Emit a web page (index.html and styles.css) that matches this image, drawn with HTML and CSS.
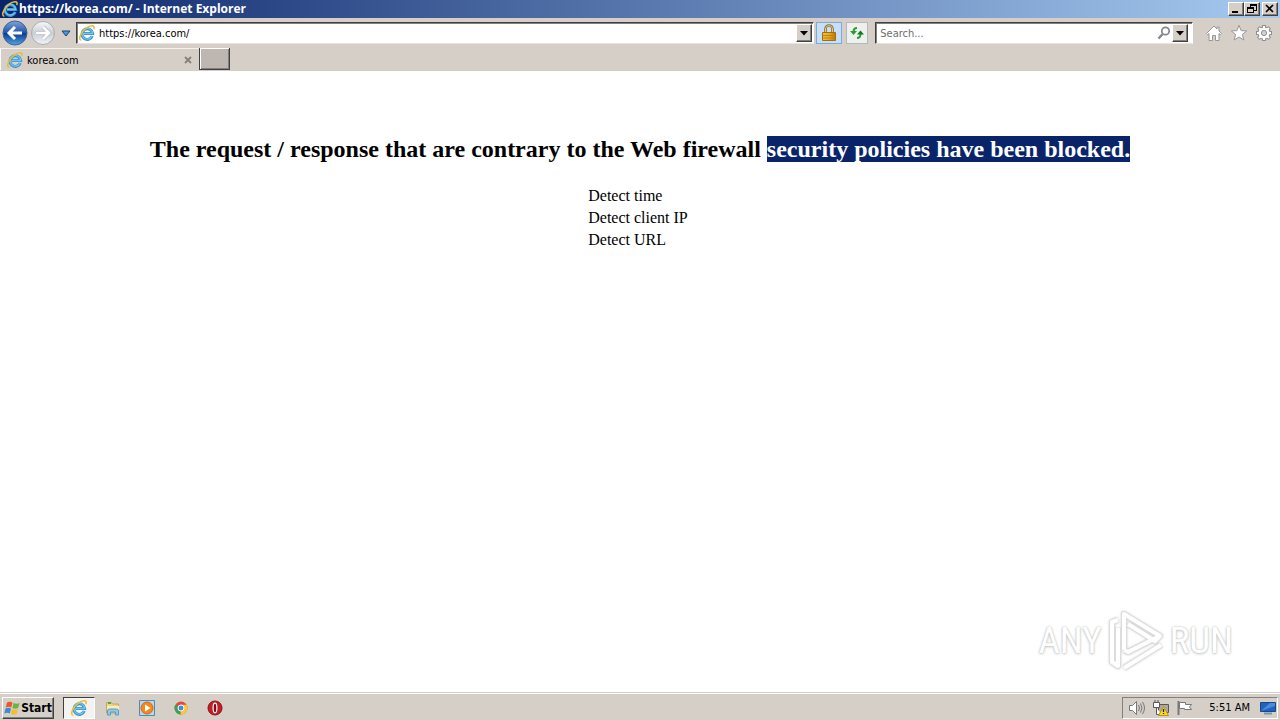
FILE: index.html
```html
<!DOCTYPE html>
<html lang="en">
<head>
<meta charset="UTF-8">
<meta name="viewport" content="width=device-width, initial-scale=1.0">
<title>korea.com</title>
<link rel="stylesheet" href="styles.css">
</head>
<body>
<svg class="defs" width="0" height="0" aria-hidden="true">
    <defs>
        <linearGradient id="blueBall" x1="0" y1="0" x2="0" y2="1">
            <stop offset="0" stop-color="#7fa3dc"/>
            <stop offset="0.48" stop-color="#2456ac"/>
            <stop offset="0.52" stop-color="#0d3c92"/>
            <stop offset="1" stop-color="#4fa5e8"/>
        </linearGradient>
        <linearGradient id="greyBall" x1="0" y1="0" x2="0" y2="1">
            <stop offset="0" stop-color="#f8f9fa"/>
            <stop offset="0.5" stop-color="#c9ced5"/>
            <stop offset="1" stop-color="#f2f5f8"/>
        </linearGradient>
        <linearGradient id="gold" x1="0" y1="0" x2="1" y2="0">
            <stop offset="0" stop-color="#f6c33b"/>
            <stop offset="0.5" stop-color="#e9a820"/>
            <stop offset="1" stop-color="#b87809"/>
        </linearGradient>
        <symbol id="ie" viewBox="0 0 16 16">
            <path d="M13.300 11A5.300 5.300 0 1 1 13.600 8.500H5" fill="none" stroke="#3a93cf" stroke-width="3"/>
            <path d="M13 11.200A5.300 5.300 0 1 1 13.600 8.500H5" fill="none" stroke="#72c4ef" stroke-width="1.300"/>
            <path d="M2.400 15.200C0 15 .3 12 2.400 8.600 5 4.500 9.500 1 13 .8c2.100-.1 2.500 1.300 1.700 3.300" fill="none" stroke="#e9bd35" stroke-width="1.500"/>
        </symbol>
    </defs>
</svg>

<header class="browser">
    <div class="title-bar">
        <svg class="icon"><use href="#ie"/></svg>
        <span class="title">https://korea.com/ - Internet Explorer</span>
        <div class="window-buttons">
            <button class="win-btn" aria-label="Minimize"><svg width="12" height="10"><path d="M2 7h6v2H2z"/></svg></button>
            <button class="win-btn" aria-label="Restore"><svg width="12" height="10"><path d="M4 0h7v7H8V6h2V2H5v1H4zM1 3h7v6H1zM2 5v3h5V5z" fill-rule="evenodd"/></svg></button>
            <button class="win-btn close" aria-label="Close"><svg width="12" height="10"><path d="M2 1l7 7M9 1L2 8" stroke="#000" stroke-width="1.7"/></svg></button>
        </div>
    </div>

    <div class="nav-bar">
        <button class="nav-btn" aria-label="Back">
            <svg width="26" height="26"><circle cx="13" cy="13" r="12" fill="url(#blueBall)" stroke="#42618f"/><path d="M13 7l-6 6 6 6M7.500 13H20" fill="none" stroke="#fff" stroke-width="3"/></svg>
        </button>
        <button class="nav-btn" aria-label="Forward">
            <svg width="26" height="26"><circle cx="13" cy="13" r="11.500" fill="url(#greyBall)" stroke="#a8acb2"/><path d="M13 7l6 6-6 6M18.500 13H6" fill="none" stroke="#b4b9c0" stroke-width="4"/><path d="M13 7l6 6-6 6M18.500 13H6" fill="none" stroke="#fff" stroke-width="2.600"/></svg>
        </button>
        <button class="nav-btn recent" aria-label="Recent pages">
            <svg width="10" height="7"><path d="M1 1h8L5 6z" fill="#4c9ade" stroke="#17427e"/></svg>
        </button>
        <div class="field address">
            <svg class="icon"><use href="#ie"/></svg>
            <input class="text-box" type="text" value="https://korea.com/" aria-label="Address">
            <button class="arrow" aria-label="Show address list"><svg width="8" height="5"><path d="M0 0h8L4 4.500z"/></svg></button>
        </div>
        <button class="tool lock" aria-label="Security report">
            <svg width="16" height="18"><path d="M4.500 9V5a3.500 3.500 0 0 1 7 0v4" fill="none" stroke="#8c6d28" stroke-width="2.600"/><path d="M4.500 9V5a3.500 3.500 0 0 1 7 0v4" fill="none" stroke="#e3c988" stroke-width="1"/><path d="M1.500 8.500h13v8h-13z" fill="url(#gold)" stroke="#a86d0a"/><path d="M2 11.500h12M2 14h12" stroke="#b98316"/></svg>
        </button>
        <button class="tool refresh" aria-label="Refresh">
            <svg width="16" height="16" fill="none" stroke="#2d9a35" stroke-width="2"><path d="M8 3C5.500 3 4.500 4.500 4.500 7"/><path d="M1 6h7l-3.500 4z" fill="#2d9a35" stroke="none"/><path d="M8 13c2.500 0 3.500-1.500 3.500-4"/><path d="M8 9.500h7L11.500 5.500z" fill="#15761e" stroke="none"/></svg>
        </button>
        <div class="field search">
            <input class="text-box" type="text" placeholder="Search..." aria-label="Search">
            <svg width="14" height="14" fill="none" stroke="#85868b"><circle cx="8.500" cy="5" r="3.700" stroke-width="1.700"/><path d="M5.700 8L1.500 12.500" stroke-width="2.400"/></svg>
            <button class="arrow" aria-label="Search options"><svg width="8" height="5"><path d="M0 0h8L4 4.500z"/></svg></button>
        </div>
        <div class="commands">
            <button class="nav-btn" aria-label="Home"><svg width="18" height="18" fill="#fff" stroke="#96979b"><path d="M9 2L1.500 9.500l1.200 1.200L4 9.500v7h3.500v-5h3v5H14v-7l1.300 1.200 1.200-1.200L14 7V3h-2v2z"/></svg></button>
            <button class="nav-btn" aria-label="Favorites"><svg width="18" height="18" fill="#fff" stroke="#96979b"><path d="M9 1.300l2.100 5.300 5.600.3-4.300 3.600 1.400 5.500L9 13l-4.800 3 1.400-5.500L1.300 6.900l5.600-.3z"/></svg></button>
            <button class="nav-btn" aria-label="Tools"><svg width="18" height="18"><g stroke="#8e9095" stroke-width="4"><path d="M9 1v16M1 9h16M3.300 3.300l11.400 11.400M14.700 3.300L3.300 14.700"/></g><circle cx="9" cy="9" r="6.500" fill="#8e9095"/><g stroke="#fff" stroke-width="2"><path d="M9 2v14M2 9h14M4 4l10 10M14 4L4 14"/></g><circle cx="9" cy="9" r="5.500" fill="#fff"/><circle cx="9" cy="9" r="2.600" fill="#d6cfc8" stroke="#8e9095"/></svg></button>
        </div>
    </div>

    <div class="tab-bar">
        <div class="tab">
            <svg class="icon"><use href="#ie"/></svg>
            <span class="tab-title">korea.com</span>
            <button class="tab-close" aria-label="Close tab"><svg width="8" height="8"><path d="M1 1l6 6M7 1L1 7" stroke="#85807a" stroke-width="1.800"/></svg></button>
        </div>
        <button class="new-tab" aria-label="New tab"></button>
    </div>
</header>

<main class="page">
    <h1 class="message">The request / response that are contrary to the Web firewall <mark class="selected">security policies have been blocked.</mark></h1>
    <table class="details">
        <tr><td>Detect time</td><td></td></tr>
        <tr><td>Detect client IP</td><td></td></tr>
        <tr><td>Detect URL</td><td></td></tr>
    </table>
    <div class="watermark">
        <span>ANY</span>
        <svg width="60" height="64" fill="none" stroke-linejoin="round">
            <g stroke="#dcdcdc" stroke-width="6"><path d="M18 42V6l36 22-5 5L22 16M18 42l4 2 32-16"/><path d="M12 12L6 14v40l6 4V20M18 60l37-23"/></g>
            <g stroke="#fff" stroke-width="4"><path d="M18 42V6l36 22-5 5L22 16M18 42l4 2 32-16"/><path d="M12 12L6 14v40l6 4V20M18 60l37-23"/></g>
        </svg>
        <span>RUN</span>
    </div>
</main>

<footer class="taskbar">
    <button class="start">
        <svg width="17" height="16"><path d="M3 2.500q3-1.500 5.500 0L7.300 7.500q-2.500-1.500-5.500 0z" fill="#e8582a"/><path d="M9.500 3q3 1.500 6 0l-1.300 5q-3 1.500-5.800 0z" fill="#6db33f"/><path d="M1.500 8.500q3-1.500 5.500 0l-1.200 5q-2.500-1.500-5.500 0z" fill="#3c8bd6"/><path d="M8 9q3 1.500 6 0l-1.300 5q-3 1.500-5.800 0z" fill="#f5bf2c"/></svg>
        Start
    </button>
    <div class="launchers">
        <button class="launch active" aria-label="Internet Explorer"><svg class="icon"><use href="#ie"/></svg></button>
        <button class="launch" aria-label="Explorer"><svg width="16" height="16"><path d="M1.500 2.500h5l1 1.500h6v9h-12z" fill="#ecd584" stroke="#c8a849"/><path d="M3 3h3" stroke="#4aa84a" stroke-width="2"/><path d="M2 6h12v4H2z" fill="#fbeeb5"/><path d="M2.500 15v-4q0-2 2-2h7q2 0 2 2v4h-3v-3h-5v3z" fill="#8fc9ea" stroke="#559cc8"/></svg></button>
        <button class="launch" aria-label="Media Player"><svg width="16" height="16"><path d="M.5.5h15v15H.5z" fill="#b9d8ef" stroke="#5189b8"/><circle cx="8" cy="8" r="6" fill="#f08a1d" stroke="#d46b0c"/><path d="M6 4.500v7L11.500 8z" fill="#fff"/></svg></button>
        <button class="launch" aria-label="Chrome"><svg width="16" height="16"><circle cx="8" cy="8" r="6.500" fill="#e24a37"/><path d="M8 8L2.400 4.700A6.500 6.500 0 0 0 7.500 14.500z" fill="#35a651"/><path d="M8 8l-.5 6.500A6.500 6.500 0 0 0 13.600 4.700H8z" fill="#f8cb34"/><circle cx="8" cy="8" r="3" fill="#4788ee" stroke="#fff"/></svg></button>
        <button class="launch" aria-label="Opera"><svg width="16" height="16"><circle cx="8" cy="8" r="7" fill="#c51d25" stroke="#8b1018"/><ellipse cx="8" cy="8" rx="1.900" ry="4.800" fill="#7c0b12" stroke="#fff" stroke-width="1.200"/></svg></button>
    </div>
    <div class="tray">
        <svg width="18" height="16" fill="#fff" stroke="#77777a"><path d="M1.500 5.500h3l4-4v13l-4-4h-3z"/><path d="M10.500 5q2 3 0 6M12.500 3.500q3 4.500 0 9M14.500 2q4 6 0 12" fill="none"/></svg>
        <svg width="16" height="16"><path d="M5.500 4.500h10v8h-10z" fill="#aaa89f" stroke="#57575a"/><path d="M.5 2.500h6v5h-6zM2 0v2M5 0v2M3.500 8v6.500H9" fill="#fff" stroke="#57575a"/><path d="M10.500 6.500l5 9h-10z" fill="#fbd928" stroke="#ba9713"/><path d="M10.500 9v3M10.500 13v1" stroke="#222" stroke-width="1.300"/></svg>
        <svg width="18" height="16"><path d="M2.500 1v14" stroke="#77777a" stroke-width="2"/><path d="M3.500 2.500h6v2h6l-2 2.500 2 2.500h-7v-1h-5z" fill="#fff" stroke="#77777a"/></svg>
        <span class="clock">5:51 AM</span>
        <svg width="16" height="14"><path d="M.5 1.500h15v9H.5z" fill="#2262bd" stroke="#1b4789"/><path d="M1 10L10 2h5v3z" fill="#4b8bdd"/><path d="M4 12.500h8" stroke="#7393b6" stroke-width="2"/></svg>
    </div>
</footer>
</body>
</html>
```

FILE: styles.css
```css
* {
    box-sizing: border-box;
}
body {
    margin: 0;
    min-height: 100vh;
    display: flex;
    flex-direction: column;
    background-color: #fff;
    color: #000;
    font-family: "DejaVu Sans Condensed", "DejaVu Sans", sans-serif;
    font-size: 11px;
}
button {
    display: flex;
    align-items: center;
    justify-content: center;
    padding: 0;
    border: none;
    background: none;
    color: #000;
    font-family: inherit;
}
svg {
    display: block;
    flex-shrink: 0;
}
.defs {
    position: absolute;
}
.icon {
    width: 16px;
    height: 16px;
}

/* window frame */
.browser {
    background-color: #d6cfc8;
}
.title-bar {
    display: flex;
    align-items: center;
    height: 18px;
    padding: 0 2px;
    background: linear-gradient(to right, #0a246a, #a6caf0);
    color: #fff;
}
.title {
    flex: 1;
    padding-left: 1px;
    font-family: "Open Sans", "DejaVu Sans Condensed", sans-serif;
    font-size: 12px;
    line-height: 16px;
    font-weight: bold;
}
.window-buttons {
    display: flex;
}
.win-btn, .arrow, .start {
    background-color: #d6cfc8;
    border: 1px solid;
    border-color: #fff #404040 #404040 #fff;
    box-shadow: inset -1px -1px #808080;
}
.win-btn {
    width: 16px;
    height: 14px;
}
.win-btn.close {
    margin-left: 2px;
}

/* address and search */
.nav-bar {
    display: flex;
    align-items: center;
    height: 30px;
    padding: 0 7px 0 2px;
}
.nav-btn {
    height: 26px;
}
.nav-btn + .nav-btn {
    margin-left: 2px;
}
.nav-btn.recent {
    width: 16px;
}
.field {
    display: flex;
    align-items: center;
    height: 22px;
    padding-right: 1px;
    background-color: #fff;
    border: 1px solid;
    border-color: #404040 #fff #e8e4dc #404040;
    box-shadow: inset 1px 1px #808080;
}
.address {
    flex: 1;
    margin-left: 2px;
    padding-left: 2px;
}
.text-box {
    flex: 1;
    min-width: 0;
    padding: 0 4px;
    border: none;
    outline: none;
    background: none;
    font-family: inherit;
    font-size: 11px;
}
.text-box::placeholder {
    color: #6d6d6d;
}
.arrow {
    width: 16px;
    height: 18px;
}
.tool {
    height: 22px;
    border: 1px solid #b4b8ba;
}
.lock {
    width: 26px;
    margin-left: 2px;
    background-color: #c8dff8;
    border-color: #79a9df;
}
.refresh {
    width: 22px;
    margin-left: 4px;
    background-color: #edf1ee;
}
.search {
    width: 25%;
    max-width: 318px;
    margin-left: 7px;
}
.search .arrow {
    margin: 0 3px 0 1px;
}
.commands {
    display: flex;
    gap: 5px;
    margin-left: 12px;
}

/* tabs */
.tab-bar {
    display: flex;
    height: 23px;
    border-bottom: 1px solid #d6cfc8;
}
.tab {
    display: flex;
    align-items: center;
    width: 199px;
    padding: 1px 7px 0 6px;
    border-top: 1px solid #f4f2ee;
    border-left: 1px solid #fff;
}
.tab-title {
    flex: 1;
    padding-left: 4px;
}
.new-tab {
    width: 31px;
    background-color: #bdb6b1;
    border: solid #404040;
    border-width: 0 1px 1px;
    box-shadow: inset 1px 1px #fff, inset -1px -1px #808080;
}

/* blocked page */
.page {
    flex: 1;
    position: relative;
    padding: 65px 8px 0;
    font-family: "Liberation Serif", serif;
    font-size: 16px;
}
.message {
    margin: 0 0 21px;
    font-size: 24px;
    line-height: 27px;
    text-align: center;
}
.selected {
    background-color: #0a246a;
    color: #fff;
}
.details {
    margin: 0 auto;
}
.watermark {
    position: absolute;
    right: 47px;
    bottom: 20px;
    display: flex;
    align-items: center;
    gap: 4px;
    color: #fff;
    font-family: "Roboto Condensed", "Liberation Sans Narrow", Roboto, sans-serif;
    font-size: 37px;
    text-shadow: 0 0 2px #bbb, 0 1px 3px #ccc;
}
.watermark svg {
    filter: drop-shadow(0 0 1px #ccc);
}

/* taskbar */
.taskbar {
    display: flex;
    align-items: center;
    height: 28px;
    padding: 2px 2px 0;
    background-color: #d6cfc8;
    border-top: 1px solid #d6cfc8;
    box-shadow: inset 0 1px #fff;
}
.start {
    width: 52px;
    height: 22px;
    font-size: 12px;
    font-weight: bold;
}
.launchers {
    display: flex;
    flex: 1;
    gap: 2px;
    margin-left: 9px;
}
.launch {
    width: 32px;
    height: 22px;
}
.launch.active {
    background-color: #f4f3ef;
    border: 1px solid;
    border-color: #404040 #fff #fff #404040;
}
.tray {
    display: flex;
    align-items: center;
    gap: 7px;
    height: 22px;
    padding: 0 1px 0 5px;
    border: 1px solid;
    border-color: #808080 #fff #fff #808080;
}
.clock {
    padding: 0 3px 0 8px;
}
```
